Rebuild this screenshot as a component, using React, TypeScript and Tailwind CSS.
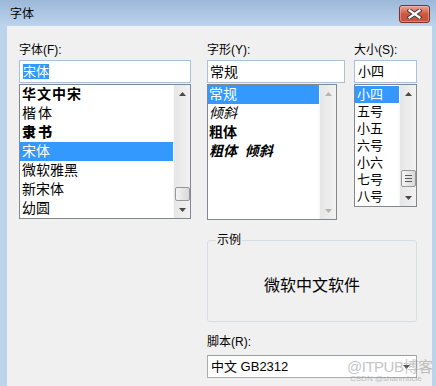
import React from "react";

function Arrow({ up, disabled }: { up?: boolean; disabled?: boolean }) {
  const c = disabled ? "#b4b4b4" : "#4a4a4a";
  return (
    <svg width="7" height="4" viewBox="0 0 7 4">
      {up ? <path d="M0 4 L3.5 0 L7 4Z" fill={c} /> : <path d="M0 0 L3.5 4 L7 0Z" fill={c} />}
    </svg>
  );
}

function ScrollBar({
  disabled,
  thumbTop,
  thumbH,
  grip,
}: {
  disabled?: boolean;
  thumbTop?: number;
  thumbH?: number;
  grip?: boolean;
}) {
  return (
    <div className="relative w-[17px] h-full bg-gradient-to-r from-[#e6e6e6] to-[#f2f2f2] border-l border-[#f7f7f7] flex flex-col justify-between">
      <div className="h-[17px] flex items-center justify-center">
        <Arrow up disabled={disabled} />
      </div>
      <div className="h-[17px] flex items-center justify-center">
        <Arrow disabled={disabled} />
      </div>
      {thumbTop !== undefined && (
        <div
          className="absolute left-[1px] w-[15px] rounded-[2px] border border-[#989898] bg-gradient-to-r from-[#f4f4f4] to-[#d9d9d9] flex flex-col items-center justify-center gap-[2px]"
          style={{ top: thumbTop, height: thumbH }}
        >
          {grip && (
            <>
              <div className="w-[7px] h-[1px] bg-[#5a5a5a]" />
              <div className="w-[7px] h-[1px] bg-[#5a5a5a]" />
              <div className="w-[7px] h-[1px] bg-[#5a5a5a]" />
            </>
          )}
        </div>
      )}
    </div>
  );
}

function CloseButton() {
  return (
    <div className="mt-[5px] w-[31px] h-[18px] rounded-[3px] border border-[#7d3227] bg-gradient-to-b from-[#e7a797] via-[#cf5740] to-[#c9503a] flex items-center justify-center shadow-[inset_0_0_0_1px_rgba(255,200,190,0.45)]">
      <svg width="15" height="10" viewBox="0 0 15 10">
        <path d="M2.5 1.5 L12.5 8.5 M12.5 1.5 L2.5 8.5" stroke="#3a3a3a" strokeWidth="4" strokeLinecap="square" />
        <path d="M2.5 1.5 L12.5 8.5 M12.5 1.5 L2.5 8.5" stroke="#ffffff" strokeWidth="2.2" strokeLinecap="square" />
      </svg>
    </div>
  );
}

export default function App() {
  const fonts: { t: string; cls: string; sel?: boolean }[] = [
    { t: "华文中宋", cls: "font-bold tracking-[1px]" },
    { t: "楷体", cls: "tracking-[2px]" },
    { t: "隶书", cls: "font-black tracking-[2px] text-[13px]" },
    { t: "宋体", cls: "", sel: true },
    { t: "微软雅黑", cls: "" },
    { t: "新宋体", cls: "" },
    { t: "幼圆", cls: "" },
  ];
  const styles: { t: string; cls: string; sel?: boolean }[] = [
    { t: "常规", cls: "", sel: true },
    { t: "倾斜", cls: "italic" },
    { t: "粗体", cls: "font-bold" },
    { t: "粗体  倾斜", cls: "font-bold italic whitespace-pre" },
  ];
  const sizes = ["小四", "五号", "小五", "六号", "小六", "七号", "八号"];

  return (
    <div className="w-[436px] h-[386px] flex flex-col bg-[#bcd3ec] text-black text-[12px] font-['Liberation_Sans','Noto_Sans_CJK_SC',sans-serif] overflow-hidden">
      {/* title bar */}
      <div className="h-[26px] flex items-start justify-between pl-[10px] pr-[6px] bg-gradient-to-b from-[#9cb8d9] to-[#bcd3ec]">
        <span className="mt-[7px] leading-[14px] text-[12px]">字体</span>
        <CloseButton />
      </div>
      <div className="flex-1 flex pl-[7px] pr-[4px]">
        <div className="flex-1 bg-[#f0f0f0] pt-[16px] pl-[12px]">
          <div className="flex items-start">
            {/* font family column */}
            <div className="w-[172px] flex flex-col">
              <div className="h-[16px] leading-[16px]">字体(F):</div>
              <div className="mt-[2px] h-[23px] border border-[#a9c0d6] bg-white pl-[3px] flex items-center">
                <span className="bg-[#3399ff] text-white text-[13px] leading-[15px]">宋体</span>
              </div>
              <div className="mt-[1px] h-[135px] border border-[#828790] bg-white flex">
                <div className="flex-1 flex flex-col">
                  {fonts.map((f) => (
                    <div
                      key={f.t}
                      className={`h-[19px] leading-[19px] pl-[2px] text-[14px] ${f.cls} ${
                        f.sel ? "bg-[#3399ff] text-white" : ""
                      }`}
                    >
                      {f.t}
                    </div>
                  ))}
                </div>
                <ScrollBar thumbTop={102} thumbH={14} />
              </div>
            </div>
            {/* style column */}
            <div className="ml-[16px] w-[138px] flex flex-col">
              <div className="h-[16px] leading-[16px]">字形(Y):</div>
              <div className="mt-[2px] h-[23px] border border-[#a9c0d6] bg-white pl-[2px] flex items-center text-[14px] leading-[16px]">
                常规
              </div>
              <div className="mt-[1px] w-[130px] h-[136px] border border-[#828790] bg-white flex">
                <div className="flex-1 flex flex-col">
                  {styles.map((s) => (
                    <div
                      key={s.t}
                      className={`h-[19px] leading-[19px] pl-[1px] text-[14px] ${s.cls} ${
                        s.sel ? "bg-[#3399ff] text-white" : ""
                      }`}
                    >
                      {s.t}
                    </div>
                  ))}
                </div>
                <ScrollBar disabled />
              </div>
            </div>
            {/* size column */}
            <div className="ml-[9px] w-[63px] flex flex-col">
              <div className="h-[16px] leading-[16px]">大小(S):</div>
              <div className="mt-[2px] h-[23px] border border-[#a9c0d6] bg-white pl-[3px] flex items-center text-[13px] leading-[15px]">
                小四
              </div>
              <div className="mt-[1px] h-[123px] border border-[#828790] bg-white flex">
                <div className="flex-1 flex flex-col pt-[1px]">
                  {sizes.map((s, i) => (
                    <div
                      key={s}
                      className={`h-[17px] leading-[17px] pl-[2px] text-[13px] ${
                        i === 0 ? "bg-[#3399ff] text-white" : ""
                      }`}
                    >
                      {s}
                    </div>
                  ))}
                </div>
                <ScrollBar thumbTop={85} thumbH={17} grip />
              </div>
            </div>
          </div>

          {/* lower section */}
          <div className="ml-[188px] w-[210px] flex flex-col">
            <div className="relative mt-[20px] h-[82px] rounded-[3px] border border-[#d5dfe5] flex items-center justify-center">
              <span className="absolute top-[-9px] left-[8px] px-[1px] bg-[#f0f0f0] leading-[16px]">示例</span>
              <span className="text-[16px] leading-[20px] mt-[10px]">微软中文软件</span>
            </div>
            <div className="mt-[12px] h-[16px] leading-[16px]">脚本(R):</div>
            <div className="relative mt-[5px] h-[23px] border border-[#abadb3] border-t-[#9a9ea6] bg-white pl-[3px] flex items-center text-[13px] leading-[15px]">
              中文 GB2312
              <div className="absolute right-[6px] top-[9px]">
                <Arrow />
              </div>
              <div className="absolute left-[139px] top-[3px] flex flex-col items-start whitespace-nowrap pointer-events-none">
                <span className="text-[15px] leading-[15px] text-[#8c8c8c] opacity-50 tracking-[-0.5px]">@ITPUB博客</span>
                <span className="text-[8px] leading-[9px] text-[#8c8c8c] opacity-50 ml-[3px]">CSDN @shanmbcle</span>
              </div>
            </div>
          </div>
        </div>
      </div>
    </div>
  );
}
